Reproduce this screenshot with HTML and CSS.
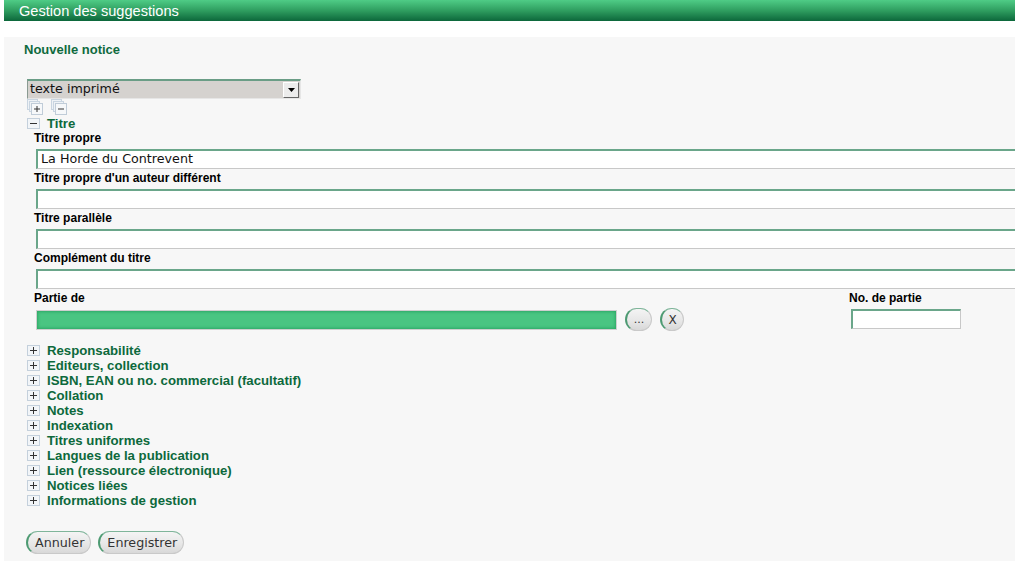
FILE: index.html
```html
<!DOCTYPE html>
<html lang="fr">
<head>
<meta charset="utf-8">
<title>Gestion des suggestions</title>
<link rel="stylesheet" href="styles.css">
</head>
<body>
<div class="header">Gestion des suggestions</div>
<div class="panel">
  <h3 class="title">Nouvelle notice</h3>
  <div class="select">
    <span class="select-text">texte imprimé</span>
    <span class="select-btn"><svg width="7" height="4" viewBox="0 0 7 4"><path d="M0 0h7L3.5 4z" fill="#000"/></svg></span>
  </div>
  <div class="tools">
    <svg class="stack" width="17" height="17" viewBox="0 0 17 17">
      <rect x="0.5" y="0.5" width="10" height="10" fill="#eef2f6" stroke="#c9d5e1"/>
      <rect x="2.5" y="2.5" width="10" height="10" fill="#eef2f6" stroke="#c9d5e1"/>
      <rect x="4.5" y="4.5" width="11" height="11" fill="#f6f8fa" stroke="#c0ccd8"/>
      <path d="M7 10h6M10 7v6" stroke="#333" stroke-width="1"/>
    </svg>
    <svg class="stack" width="17" height="17" viewBox="0 0 17 17">
      <rect x="0.5" y="0.5" width="10" height="10" fill="#eef2f6" stroke="#c9d5e1"/>
      <rect x="2.5" y="2.5" width="10" height="10" fill="#eef2f6" stroke="#c9d5e1"/>
      <rect x="4.5" y="4.5" width="11" height="11" fill="#f6f8fa" stroke="#c0ccd8"/>
      <path d="M7 10h6" stroke="#333" stroke-width="1"/>
    </svg>
  </div>
  <div class="section open">
    <div class="sec-head">
      <svg class="toggle" width="13" height="11" viewBox="0 0 13 11"><rect x="0.5" y="0.5" width="12" height="10" fill="#f2f5f8" stroke="#c4d0dc"/><path d="M3 5.5h7" stroke="#333"/></svg>
      <span class="sec-title">Titre</span>
    </div>
    <div class="fields">
      <label class="lbl">Titre propre</label>
      <div class="input wide">La Horde du Contrevent</div>
      <label class="lbl">Titre propre d'un auteur différent</label>
      <div class="input wide"></div>
      <label class="lbl">Titre parallèle</label>
      <div class="input wide"></div>
      <label class="lbl">Complément du titre</label>
      <div class="input wide"></div>
      <div class="partie">
        <div class="col-left">
          <label class="lbl">Partie de</label>
          <div class="row">
            <div class="greenbar"></div>
            <span class="pill small">...</span>
            <span class="pill small x">X</span>
          </div>
        </div>
        <div class="col-right">
          <label class="lbl">No. de partie</label>
          <div class="input short"></div>
        </div>
      </div>
    </div>
  </div>
  <ul class="sections">
    <li><svg class="toggle" width="13" height="11" viewBox="0 0 13 11"><rect x="0.5" y="0.5" width="12" height="10" fill="#f2f5f8" stroke="#c4d0dc"/><path d="M3 5.5h7M6.5 2v7" stroke="#333"/></svg><span class="sec-title">Responsabilité</span></li>
    <li><svg class="toggle" width="13" height="11" viewBox="0 0 13 11"><rect x="0.5" y="0.5" width="12" height="10" fill="#f2f5f8" stroke="#c4d0dc"/><path d="M3 5.5h7M6.5 2v7" stroke="#333"/></svg><span class="sec-title">Editeurs, collection</span></li>
    <li><svg class="toggle" width="13" height="11" viewBox="0 0 13 11"><rect x="0.5" y="0.5" width="12" height="10" fill="#f2f5f8" stroke="#c4d0dc"/><path d="M3 5.5h7M6.5 2v7" stroke="#333"/></svg><span class="sec-title">ISBN, EAN ou no. commercial (facultatif)</span></li>
    <li><svg class="toggle" width="13" height="11" viewBox="0 0 13 11"><rect x="0.5" y="0.5" width="12" height="10" fill="#f2f5f8" stroke="#c4d0dc"/><path d="M3 5.5h7M6.5 2v7" stroke="#333"/></svg><span class="sec-title">Collation</span></li>
    <li><svg class="toggle" width="13" height="11" viewBox="0 0 13 11"><rect x="0.5" y="0.5" width="12" height="10" fill="#f2f5f8" stroke="#c4d0dc"/><path d="M3 5.5h7M6.5 2v7" stroke="#333"/></svg><span class="sec-title">Notes</span></li>
    <li><svg class="toggle" width="13" height="11" viewBox="0 0 13 11"><rect x="0.5" y="0.5" width="12" height="10" fill="#f2f5f8" stroke="#c4d0dc"/><path d="M3 5.5h7M6.5 2v7" stroke="#333"/></svg><span class="sec-title">Indexation</span></li>
    <li><svg class="toggle" width="13" height="11" viewBox="0 0 13 11"><rect x="0.5" y="0.5" width="12" height="10" fill="#f2f5f8" stroke="#c4d0dc"/><path d="M3 5.5h7M6.5 2v7" stroke="#333"/></svg><span class="sec-title">Titres uniformes</span></li>
    <li><svg class="toggle" width="13" height="11" viewBox="0 0 13 11"><rect x="0.5" y="0.5" width="12" height="10" fill="#f2f5f8" stroke="#c4d0dc"/><path d="M3 5.5h7M6.5 2v7" stroke="#333"/></svg><span class="sec-title">Langues de la publication</span></li>
    <li><svg class="toggle" width="13" height="11" viewBox="0 0 13 11"><rect x="0.5" y="0.5" width="12" height="10" fill="#f2f5f8" stroke="#c4d0dc"/><path d="M3 5.5h7M6.5 2v7" stroke="#333"/></svg><span class="sec-title">Lien (ressource électronique)</span></li>
    <li><svg class="toggle" width="13" height="11" viewBox="0 0 13 11"><rect x="0.5" y="0.5" width="12" height="10" fill="#f2f5f8" stroke="#c4d0dc"/><path d="M3 5.5h7M6.5 2v7" stroke="#333"/></svg><span class="sec-title">Notices liées</span></li>
    <li><svg class="toggle" width="13" height="11" viewBox="0 0 13 11"><rect x="0.5" y="0.5" width="12" height="10" fill="#f2f5f8" stroke="#c4d0dc"/><path d="M3 5.5h7M6.5 2v7" stroke="#333"/></svg><span class="sec-title">Informations de gestion</span></li>
  </ul>
  <div class="actions">
    <span class="pill">Annuler</span>
    <span class="pill">Enregistrer</span>
  </div>
</div>
</body>
</html>
```
FILE: styles.css
```css
html, body {
  margin: 0;
  padding: 0;
  background: #ffffff;
  overflow: hidden;
}
body {
  font-family: "Liberation Sans", Arial, sans-serif;
  width: 1015px;
  height: 565px;
}
.header {
  margin-left: 4px;
  height: 21px;
  line-height: 22px;
  padding-left: 15px;
  color: #ffffff;
  font-size: 14.6px;
  background: linear-gradient(to bottom, #4fcc86 0%, #2f9e60 50%, #0c673b 100%);
}
.panel {
  margin: 16px 0 0 4px;
  height: 524px;
  background: #f7f7f7;
  padding: 5px 0 0 0;
  box-sizing: border-box;
  overflow: hidden;
}
.title {
  margin: 0 0 22px 20px;
  font-size: 13px;
  line-height: 15px;
  color: #0f6a3e;
  font-weight: bold;
}
.select {
  margin-left: 23px;
  width: 274px;
  height: 20px;
  box-sizing: border-box;
  display: flex;
  align-items: center;
  background: #d5d2cf;
  border-top: 2px solid #6a9d86;
  border-left: 1px solid #8a9a92;
  border-bottom: 1px solid #e6e6e6;
  border-right: 1px solid #e6e6e6;
  font-family: "DejaVu Sans", sans-serif;
  font-size: 12.7px;
  color: #111;
}
.select-text {
  flex: 1;
  padding-left: 2px;
  line-height: 16px;
  margin-top: -2px;
}
.select-btn {
  width: 14px;
  height: 14px;
  margin-right: 1px;
  display: flex;
  align-items: center;
  justify-content: center;
  background: #ececec;
  border-top: 1px solid #fff;
  border-left: 1px solid #fff;
  border-right: 1px solid #666;
  border-bottom: 1px solid #666;
}
.tools {
  margin: 0 0 0 23px;
  display: flex;
  gap: 7px;
  height: 17px;
}
.sec-head {
  display: flex;
  align-items: center;
  margin-left: 23px;
  height: 15px;
}
.toggle {
  display: block;
  flex: none;
}
.sec-title {
  margin-left: 7px;
  font-size: 13.2px;
  line-height: 15px;
  font-weight: bold;
  color: #0d693c;
}
.fields {
  margin-left: 30px;
  display: flex;
  flex-direction: column;
}
.lbl {
  display: block;
  font-size: 12px;
  line-height: 15px;
  font-weight: bold;
  color: #000;
  margin-bottom: 3px;
}
.input {
  height: 20px;
  box-sizing: border-box;
  background: #fff;
  border-top: 2px solid #6aa68a;
  border-left: 2px solid #6aa68a;
  border-right: 1px solid #c8c8c8;
  border-bottom: 1px solid #c8c8c8;
  font-family: "DejaVu Sans", sans-serif;
  font-size: 12.7px;
  line-height: 16px;
  padding-left: 3px;
  color: #111;
  margin-left: 2px;
}
.wide {
  width: 1000px;
  margin-bottom: 2px;
}
.partie {
  display: flex;
  margin-bottom: 12px;
}
.col-left {
  width: 815px;
}
.row {
  display: flex;
  align-items: center;
  margin-top: -1px;
}
.greenbar {
  margin-left: 2px;
  width: 581px;
  height: 20px;
  box-sizing: border-box;
  border: 1px solid #cfcfcf;
  background: #4ac582;
  box-shadow: inset 0 0 3px 1px #2ea866;
}
.short {
  width: 110px;
}
.pill {
  display: inline-flex;
  align-items: center;
  justify-content: center;
  box-sizing: border-box;
  height: 23px;
  padding: 0 6px 0 7px;
  border-radius: 12px;
  font-family: "DejaVu Sans", sans-serif;
  font-size: 12.7px;
  color: #333;
  background: linear-gradient(to bottom, #f4f4f4 0%, #e6e6e6 60%, #d8d8d8 100%);
  border: 1px solid #c9c9c9;
  border-left: 2px solid #4d9a72;
  border-top: 1px solid #7fb59a;
}
.pill.small {
  width: 27px;
  padding: 0;
  font-size: 11px;
  margin-left: 8px;
}
.pill.small.x {
  width: 24px;
  font-size: 12px;
  margin-left: 8px;
}
.sections {
  list-style: none;
  margin: 0 0 0 23px;
  padding: 0;
}
.sections li {
  display: flex;
  align-items: center;
  height: 15px;
}
.actions {
  margin: 23px 0 0 22px;
  display: flex;
  gap: 7px;
}
```
